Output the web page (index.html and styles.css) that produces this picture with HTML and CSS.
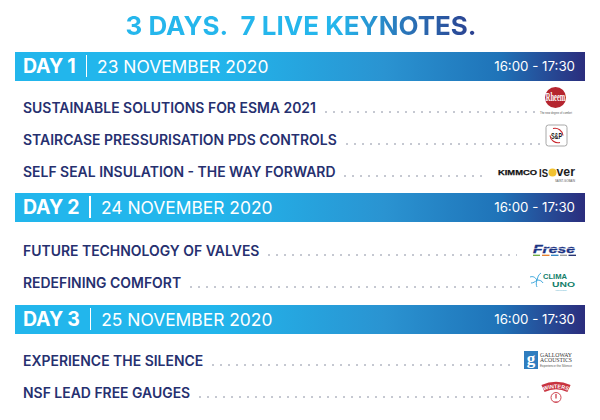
FILE: index.html
```html
<!DOCTYPE html>
<html lang="en">
<head>
<meta charset="utf-8">
<title>3 Days. 7 Live Keynotes.</title>
<link rel="stylesheet" href="styles.css">
</head>
<body>
<main class="page">
  <h1 class="title"><span class="title-text">3 DAYS.&nbsp; 7 LIVE KEYNOTES.</span></h1>

  <section class="day day-one">
    <header class="bar"><b class="bar-day">DAY 1</b><i class="bar-sep"></i><span class="bar-date">23 NOVEMBER 2020</span><span class="bar-time">16:00 - 17:30</span></header>
    <div class="rows">
      <div class="row"><span class="talk">SUSTAINABLE SOLUTIONS FOR ESMA 2021</span><i class="dots"></i>
        <svg class="logo logo-rheem" width="34" height="28" viewBox="0 0 34 28"><ellipse cx="16.500" cy="10.500" rx="10.500" ry="10.500" fill="#b5252f"/><text transform="translate(16.500 14) scale(1 2)" text-anchor="middle" class="t-rheem">Rheem</text><text x="17" y="26.500" text-anchor="middle" textLength="32" lengthAdjust="spacingAndGlyphs" class="t-tiny">The new degree of comfort</text></svg></div>
      <div class="row"><span class="talk">STAIRCASE PRESSURISATION PDS CONTROLS</span><i class="dots"></i>
        <svg class="logo logo-sp" width="23" height="23" viewBox="0 0 23 23"><rect x="1" y="1" width="21" height="21" rx="2.500" fill="#fff" stroke="#a8a8a8"/><path d="M8 4.500a8 8 0 0 1 10 7M15 18.500a8 8 0 0 1-10-7" fill="none" stroke="#c8262c" stroke-width="1.100"/><text transform="translate(11.500 14.500) scale(.72 1.300)" text-anchor="middle" class="t-sp">S&amp;P</text></svg></div>
      <div class="row"><span class="talk">SELF SEAL INSULATION - THE WAY FORWARD</span><i class="dots"></i>
        <svg class="logo logo-kimmco" width="78" height="14" viewBox="0 0 78 14"><text x="0" y="9" textLength="39" lengthAdjust="spacingAndGlyphs" class="t-kim">KIMMCO</text><text x="41" y="10.500" textLength="9" lengthAdjust="spacingAndGlyphs" class="t-iso">IS</text><circle cx="54.500" cy="6.500" r="4" fill="#f2c230"/><text x="58.500" y="10" textLength="18.500" lengthAdjust="spacingAndGlyphs" class="t-ver">ver</text><text x="77" y="15.500" text-anchor="end" textLength="20" lengthAdjust="spacingAndGlyphs" class="t-tiny">SAINT-GOBAIN</text></svg></div>
    </div>
  </section>

  <section class="day day-two">
    <header class="bar"><b class="bar-day">DAY 2</b><i class="bar-sep"></i><span class="bar-date">24 NOVEMBER 2020</span><span class="bar-time">16:00 - 17:30</span></header>
    <div class="rows">
      <div class="row"><span class="talk">FUTURE TECHNOLOGY OF VALVES</span><i class="dots"></i>
        <svg class="logo logo-frese" width="44" height="13" viewBox="0 0 44 13"><text x="1" y="8.500" textLength="42" lengthAdjust="spacingAndGlyphs" class="t-frese">Frese</text><path d="M0 4.500h44" stroke="#fff" stroke-width=".5"/><path d="M1 11.300h7" stroke="#6aa83a" stroke-width="1.300"/><path d="M10 11.300h7.500" stroke="#e57b25" stroke-width="1.300"/><path d="M19 11.300h7.500" stroke="#2a7ec0" stroke-width="1.300"/><path d="M28 11.300h7" stroke="#9a9a9a" stroke-width="1.300"/><path d="M36.500 11.300h7.500" stroke="#1c2a6b" stroke-width="1.300"/></svg></div>
      <div class="row"><span class="talk">REDEFINING COMFORT</span><i class="dots"></i>
        <svg class="logo logo-clima" width="46" height="18" viewBox="0 0 46 18"><path d="M7 8C5 5 3 4 0 5M7 8c1-3 1-5 4-7M7 8c3 0 5 1 6 3M7 8c-1 3-1 5 0 7M7 8c-2 2-4 3-6 3" fill="none" stroke="#2e9fd8" stroke-width=".9"/><text x="13" y="7" textLength="24" lengthAdjust="spacingAndGlyphs" class="t-clima">CLIMA</text><text x="22" y="15" textLength="23" lengthAdjust="spacingAndGlyphs" class="t-clima t-uno">UNO</text><text x="31" y="18.800" textLength="11" text-anchor="middle" lengthAdjust="spacingAndGlyphs" class="t-tiny t-clima-sub">Redefining Comfort</text></svg></div>
    </div>
  </section>

  <section class="day day-three">
    <header class="bar"><b class="bar-day">DAY 3</b><i class="bar-sep"></i><span class="bar-date">25 NOVEMBER 2020</span><span class="bar-time">16:00 - 17:30</span></header>
    <div class="rows">
      <div class="row"><span class="talk">EXPERIENCE THE SILENCE</span><i class="dots"></i>
        <svg class="logo logo-galloway" width="49" height="18" viewBox="0 0 49 18"><rect x="0" y="0" width="14" height="18" fill="#2f7dbf"/><text x="7" y="12.500" text-anchor="middle" class="t-g">g</text><text x="16" y="6" textLength="32" lengthAdjust="spacingAndGlyphs" class="t-gal">GALLOWAY</text><text x="16" y="11" textLength="32" lengthAdjust="spacingAndGlyphs" class="t-gal">ACOUSTICS</text><text x="16" y="16" textLength="32" lengthAdjust="spacingAndGlyphs" class="t-tiny">Experience the Silence</text></svg></div>
      <div class="row"><span class="talk">NSF LEAD FREE GAUGES</span><i class="dots"></i>
        <svg class="logo logo-winters" width="28" height="22" viewBox="0 0 28 22"><path d="M1 6.500Q14 .5 27 6.500" fill="none" stroke="#c8333f" stroke-width="7.500"/><path id="winters-arc" d="M0 9.500Q14 3 28 9.500" fill="none"/><text class="t-win"><textPath href="#winters-arc" startOffset="50%" text-anchor="middle">WINTERS</textPath></text><circle cx="14" cy="15.500" r="5" fill="#fff" stroke="#c8333f" stroke-width=".9"/><path d="M14 12v4.500" stroke="#c8333f" stroke-width="1.200"/><text x="14" y="19.500" text-anchor="middle" class="t-win-year">1901</text></svg></div>
    </div>
  </section>
</main>
</body>
</html>
```
FILE: styles.css
```css
* { box-sizing: border-box; }
html, body { margin: 0; padding: 0; background: #fff; }
body { width: 600px; height: 420px; overflow: hidden; font-family: Inter, "Liberation Sans", sans-serif; }
.page { padding: 0 15px; display: flex; flex-direction: column; }
.title { margin: 0; height: 51.500px; padding: 11px 0 0 2px; text-align: center; font-size: 26px; line-height: 30px; font-weight: 700; }
.title-text { background: linear-gradient(90deg, #25b6ec 0%, #25b6ec 60%, #2a74b8 80%, #2b3e8e 100%); -webkit-background-clip: text; background-clip: text; color: transparent; }

.bar { height: 29px; display: flex; align-items: center; padding: 0 10px 0 8px; color: #fff; background: linear-gradient(90deg, #22b6ec 0%, #22b6ec 35%, #2a93d1 65%, #1f73b8 85%, #2b2d7d 100%); }
.bar-day { font-size: 19.500px; font-weight: 700; letter-spacing: -.2px; }
.bar-sep { width: 1.500px; height: 22px; margin: 0 10px; background: #fff; }
.bar-date { font-size: 17.400px; font-weight: 400; }
.bar-time { margin-left: auto; font-size: 13.300px; }

.day-one { height: 141px; }
.day-two { height: 112px; }
.rows { display: flex; flex-direction: column; padding: 10.500px 0 0 8px; }
.day-two .rows { padding-top: 12.500px; }
.row { height: 32px; display: flex; align-items: center; }
.talk { font-size: 13.950px; font-weight: 600; color: #26306f; white-space: nowrap; }
.dots { flex: 1; height: 2px; margin: 9px 4px 0 6px; background: radial-gradient(circle, #c4c7d0 .7px, transparent 1px) left center / 8px 2px repeat-x; }

.logo { flex: none; display: block; overflow: visible; }
.logo-rheem { margin: 0 12px 12px 0; }
.logo-sp { margin: 0 17px 7px 0; }
.logo-kimmco { margin: 4px 9px 0 7px; }
.logo-frese { margin: 0 9px 0 11px; }
.logo-clima { margin: 0 9px 2px 3px; }
.logo-galloway { margin: 0 12px 0 5px; }
.logo-winters { margin: 2px 15px 0 3px; }

.t-rheem { font: 700 6.500px "Liberation Serif", serif; fill: #fff; }
.t-tiny { font: 2.800px "Liberation Sans", sans-serif; fill: #555; }
.t-sp { font: 700 7.500px "Liberation Sans", sans-serif; fill: #1a1a1a; }
.t-kim { font: 900 8px "Liberation Sans", sans-serif; fill: #111; stroke: #111; stroke-width: .25px; }
.t-iso { font: 700 11px "Liberation Sans", sans-serif; fill: #1e1e1e; }
.t-ver { font: 700 13px "Liberation Sans", sans-serif; fill: #1e1e1e; }
.t-frese { font: italic 700 11px "Liberation Sans", sans-serif; fill: #1c3484; stroke: #1c3484; stroke-width: .3px; }
.t-clima { font: 700 7px "Liberation Sans", sans-serif; fill: #12806a; }
.t-uno { font-size: 8px; }
.t-clima-sub { font-size: 2.400px; fill: #3aa5c8; }
.t-g { font: 700 17px "Liberation Serif", serif; fill: #fff; }
.t-gal { font: 5.200px "Liberation Serif", serif; fill: #333; }
.t-win { font: 700 5.400px "Liberation Sans", sans-serif; fill: #fff; }
.t-win-year { font: 700 2px "Liberation Sans", sans-serif; fill: #c8333f; }
```
